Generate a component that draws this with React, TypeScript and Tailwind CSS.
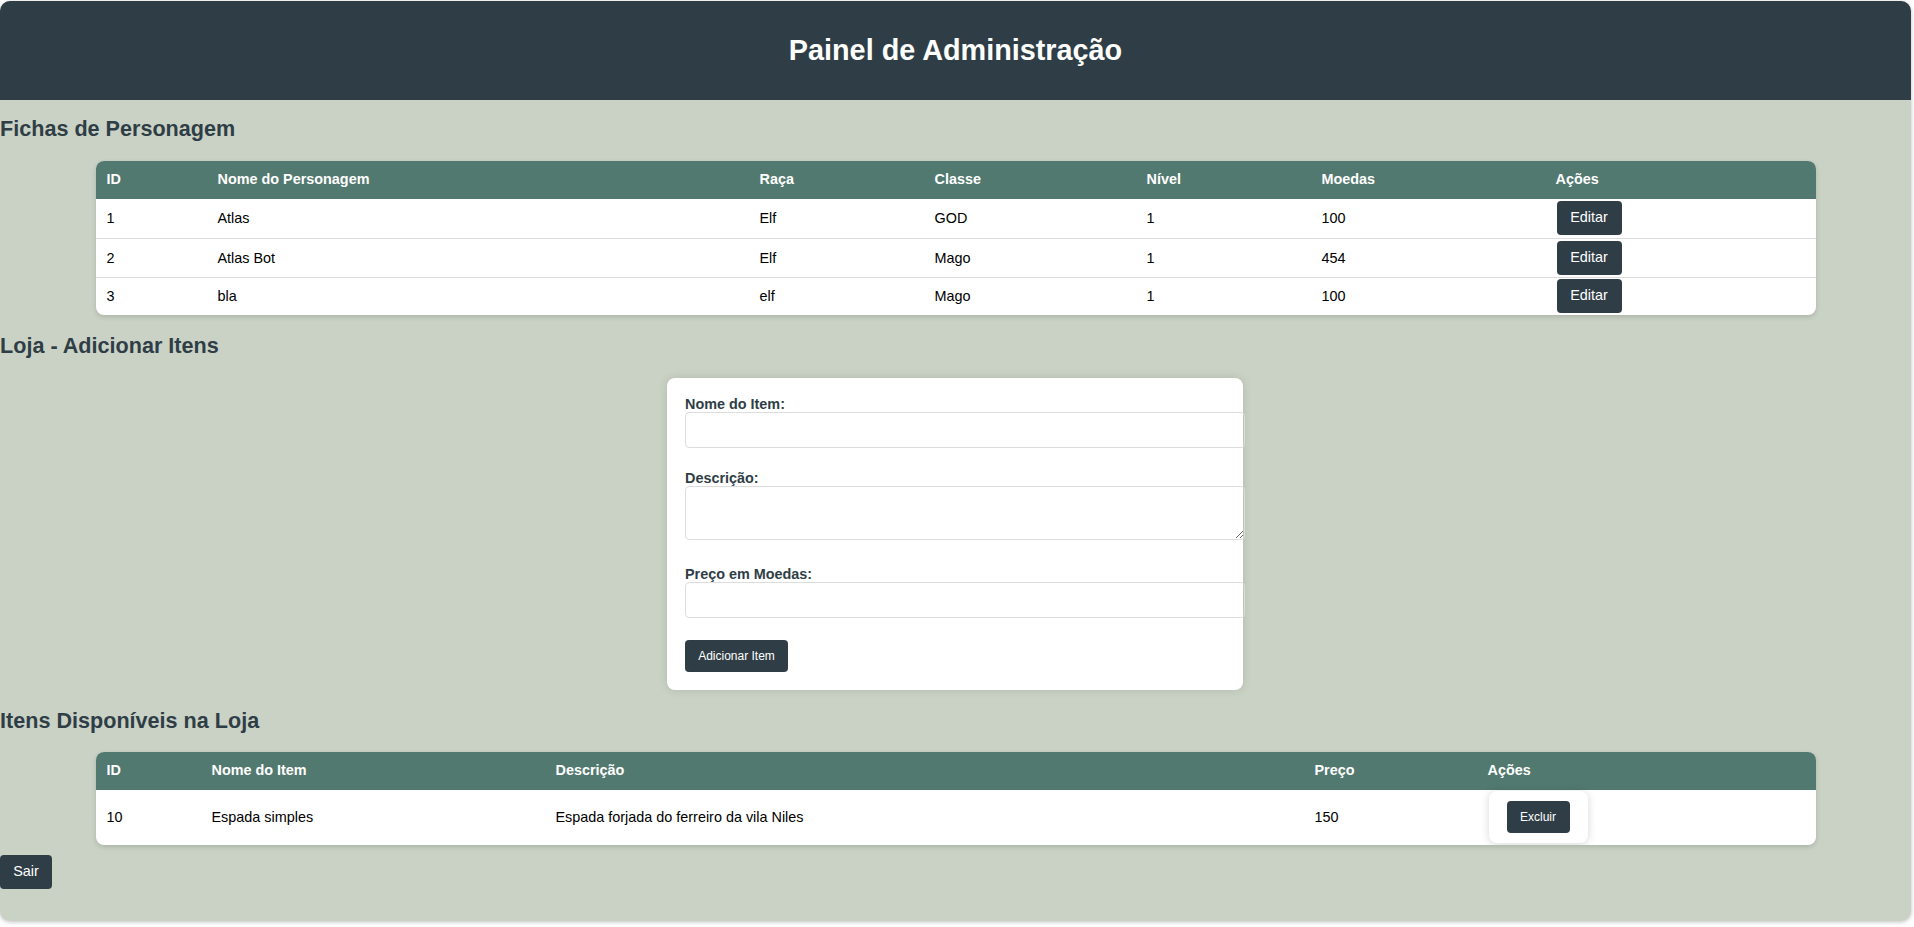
import React from 'react';

const fichas = [
    { id: 1, nome: 'Atlas', raca: 'Elf', classe: 'GOD', nivel: 1, moedas: 100 },
    { id: 2, nome: 'Atlas Bot', raca: 'Elf', classe: 'Mago', nivel: 1, moedas: 454 },
    { id: 3, nome: 'bla', raca: 'elf', classe: 'Mago', nivel: 1, moedas: 100 },
];

const itens = [
    { id: 10, nome: 'Espada simples', descricao: 'Espada forjada do ferreiro da vila Niles', preco: 150 },
];

const App: React.FC = () => {
    return (
        <div className="min-h-screen bg-white pt-[1px] font-['Liberation_Sans',Arial,sans-serif]">
            <div className="w-[1911px] h-[920px] bg-[#cad2c5] rounded-[10px] overflow-hidden shadow-[0_1px_4px_rgba(0,0,0,0.25)]">
                <header className="h-[99px] bg-[#2f3e46] flex items-center justify-center">
                    <h1 className="text-[28.8px] leading-[33px] font-bold text-white">Painel de Administração</h1>
                </header>

                <h2 className="mt-[16px] text-[21.6px] leading-[25px] font-bold text-[#2f3e46]">Fichas de Personagem</h2>
                <div className="mt-[20px] w-[1720px] mx-auto bg-white rounded-[8px] overflow-hidden shadow-[0_2px_5px_rgba(0,0,0,0.15)]">
                    <table className="w-full table-fixed border-collapse text-[14.4px]">
                        <colgroup>
                            <col className="w-[111px]" />
                            <col className="w-[542px]" />
                            <col className="w-[175px]" />
                            <col className="w-[212px]" />
                            <col className="w-[175px]" />
                            <col className="w-[234px]" />
                            <col />
                        </colgroup>
                        <thead>
                            <tr className="h-[38px] bg-[#52796f] text-white">
                                <th className="px-[11px] text-left font-bold">ID</th>
                                <th className="px-[11px] text-left font-bold">Nome do Personagem</th>
                                <th className="px-[11px] text-left font-bold">Raça</th>
                                <th className="px-[11px] text-left font-bold">Classe</th>
                                <th className="px-[11px] text-left font-bold">Nível</th>
                                <th className="px-[11px] text-left font-bold">Moedas</th>
                                <th className="px-[11px] text-left font-bold">Ações</th>
                            </tr>
                        </thead>
                        <tbody className="text-black">
                            {fichas.map((f, i) => (
                                <tr key={f.id} className={i < fichas.length - 1 ? 'h-[39px] border-b border-[#dddddd]' : 'h-[38px]'}>
                                    <td className="px-[11px] pt-[2px]">{f.id}</td>
                                    <td className="px-[11px] pt-[2px]">{f.nome}</td>
                                    <td className="px-[11px] pt-[2px]">{f.raca}</td>
                                    <td className="px-[11px] pt-[2px]">{f.classe}</td>
                                    <td className="px-[11px] pt-[2px]">{f.nivel}</td>
                                    <td className="px-[11px] pt-[2px]">{f.moedas}</td>
                                    <td className="px-[11px]">
                                        <button className="ml-[1px] w-[65px] h-[34px] rounded-[4px] bg-[#2f3e46] text-white text-[14.4px]">Editar</button>
                                    </td>
                                </tr>
                            ))}
                        </tbody>
                    </table>
                </div>

                <h2 className="mt-[18px] text-[21.6px] leading-[25px] font-bold text-[#2f3e46]">Loja - Adicionar Itens</h2>
                <form className="mt-[20px] ml-[667px] w-[576px] bg-white rounded-[8px] p-[18px] shadow-[0_0_10px_rgba(0,0,0,0.12)]">
                    <label className="block text-[14.4px] leading-[16px] font-bold text-[#2f3e46]">Nome do Item:</label>
                    <input type="text" className="block w-[560px] h-[36px] mb-[22px] border border-[#dddddd] rounded-[4px] px-[10px] text-[14.4px]" />
                    <label className="block text-[14.4px] leading-[16px] font-bold text-[#2f3e46]">Descrição:</label>
                    <textarea className="block w-[560px] h-[54px] mb-[26px] border border-[#dddddd] rounded-[4px] px-[10px] py-[8px] text-[14.4px]" />
                    <label className="block text-[14.4px] leading-[16px] font-bold text-[#2f3e46]">Preço em Moedas:</label>
                    <input type="number" className="block w-[560px] h-[36px] mb-[22px] border border-[#dddddd] rounded-[4px] px-[10px] text-[14.4px]" />
                    <button type="button" className="block w-[103px] h-[32px] rounded-[4px] bg-[#2f3e46] text-white text-[12px]">Adicionar Item</button>
                </form>

                <h2 className="mt-[18px] text-[21.6px] leading-[25px] font-bold text-[#2f3e46]">Itens Disponíveis na Loja</h2>
                <div className="mt-[19px] w-[1720px] mx-auto bg-white rounded-[8px] overflow-hidden shadow-[0_2px_5px_rgba(0,0,0,0.15)]">
                    <table className="w-full table-fixed border-collapse text-[14.4px]">
                        <colgroup>
                            <col className="w-[105px]" />
                            <col className="w-[344px]" />
                            <col className="w-[759px]" />
                            <col className="w-[173px]" />
                            <col />
                        </colgroup>
                        <thead>
                            <tr className="h-[38px] bg-[#52796f] text-white">
                                <th className="px-[11px] text-left font-bold">ID</th>
                                <th className="px-[11px] text-left font-bold">Nome do Item</th>
                                <th className="px-[11px] text-left font-bold">Descrição</th>
                                <th className="px-[11px] text-left font-bold">Preço</th>
                                <th className="px-[11px] text-left font-bold">Ações</th>
                            </tr>
                        </thead>
                        <tbody className="text-black">
                            {itens.map((it) => (
                                <tr key={it.id} className="h-[55px]">
                                    <td className="px-[11px]">{it.id}</td>
                                    <td className="px-[11px]">{it.nome}</td>
                                    <td className="px-[11px]">{it.descricao}</td>
                                    <td className="px-[11px]">{it.preco}</td>
                                    <td className="px-[11px] align-top">
                                        <div className="ml-[1px] mt-[1px] w-[99px] h-[52px] bg-white rounded-[8px] flex items-center justify-center shadow-[0_1px_8px_rgba(0,0,0,0.16)]">
                                            <button className="w-[63px] h-[32px] rounded-[4px] bg-[#2f3e46] text-white text-[12px]">Excluir</button>
                                        </div>
                                    </td>
                                </tr>
                            ))}
                        </tbody>
                    </table>
                </div>

                <button className="mt-[10px] block w-[52px] h-[34px] rounded-[4px] bg-[#2f3e46] text-white text-[14.4px]">Sair</button>
            </div>
        </div>
    );
};

export default App;
